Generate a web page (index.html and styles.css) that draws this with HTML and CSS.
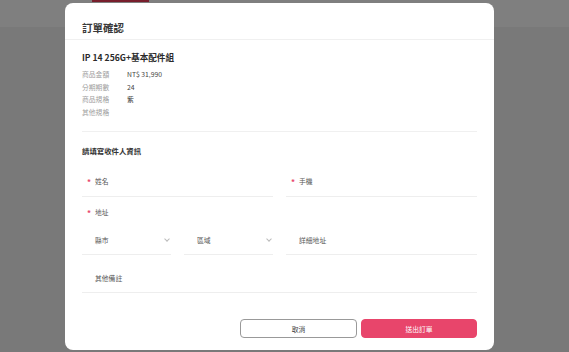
FILE: index.html
```html
<!DOCTYPE html>
<html lang="zh-Hant">
<head>
    <meta charset="UTF-8">
    <meta name="viewport" content="width=device-width, initial-scale=1.0">
    <title>訂單確認</title>
    <link rel="stylesheet" href="styles.css">
</head>
<body>
    <div class="page">
        <div class="topbar">
            <div class="tab-active"></div>
        </div>
        <div class="page-body"></div>
    </div>

    <div class="overlay">
        <div class="modal">
            <div class="modal-header">
                <h2>訂單確認</h2>
            </div>

            <div class="modal-body">
                <div class="product">
                    <h3>IP 14 256G+基本配件組</h3>
                    <div class="spec">
                        <span class="spec-label">商品金額</span><span class="spec-value">NT$ 31,990</span>
                        <span class="spec-label">分期期數</span><span class="spec-value">24</span>
                        <span class="spec-label">商品規格</span><span class="spec-value">紫</span>
                        <span class="spec-label">其他規格</span><span class="spec-value"></span>
                    </div>
                </div>

                <h4 class="section-title">請填寫收件人資訊</h4>

                <form class="receiver-form">
                    <div class="field span-2"><span class="required">*</span>姓名</div>
                    <div class="field span-2"><span class="required">*</span>手機</div>

                    <div class="group-label span-4"><span class="required">*</span>地址</div>

                    <div class="field select">縣市<span class="chevron"></span></div>
                    <div class="field select">區域<span class="chevron"></span></div>
                    <div class="field input span-2">詳細地址</div>

                    <div class="field input span-4">其他備註</div>
                </form>

                <div class="actions">
                    <button type="button" class="btn btn-cancel">取消</button>
                    <button type="button" class="btn btn-submit">送出訂單</button>
                </div>
            </div>
        </div>
    </div>
</body>
</html>
```

FILE: styles.css
```css
:root {
    --brand: #e8456b;
    --text: #333333;
    --muted: #999999;
    --line: #eeeeee;
}

* {
    box-sizing: border-box;
}

body {
    margin: 0;
    font-family: "Noto Sans CJK TC", "Noto Sans", sans-serif;
    color: var(--text);
    background: #f3f3f3;
}

.page {
    height: 352px;
}

.topbar {
    height: 27px;
    background: #ffffff;
    padding-left: 92px;
}

.tab-active {
    width: 57px;
    height: 2px;
    background: #f03d58;
}

/* dim layer over the page */
.overlay {
    position: fixed;
    inset: 0;
    background: rgba(0, 0, 0, 0.5);
    padding: 3px 0 0 65px;
}

.modal {
    width: 429px;
    height: 347px;
    background: #ffffff;
    border-radius: 8px;
}

.modal-header {
    padding: 19px 17px 5px;
    border-bottom: 1px solid #f0f0f0;
}

.modal-header h2 {
    margin: 0;
    font-size: 10.5px;
    line-height: 12px;
    font-weight: 700;
    color: #3a3a3a;
}

.modal-body {
    padding: 0 17px;
}

.product {
    padding-top: 11px;
    padding-bottom: 13px;
    border-bottom: 1px solid #f0f0f0;
}

.product h3 {
    margin: 0 0 5px;
    font-size: 8.6px;
    line-height: 12px;
    font-weight: 700;
    color: #2a2a2a;
}

.spec {
    display: grid;
    grid-template-columns: 45px 1fr;
    grid-auto-rows: 12.6px;
    align-items: center;
    font-size: 6.8px;
}

.spec-label {
    color: #a0a0a0;
}

.spec-value {
    color: #444;
}

.section-title {
    margin: 13px 0 0;
    font-size: 7.4px;
    line-height: 11px;
    font-weight: 700;
    color: #333;
}

.receiver-form {
    display: grid;
    grid-template-columns: repeat(4, 1fr);
    column-gap: 13px;
    margin-top: 10px;
}

.span-2 {
    grid-column: span 2;
}

.span-4 {
    grid-column: span 4;
}

.field {
    display: flex;
    align-items: center;
    height: 31px;
    border-bottom: 1px solid var(--line);
    padding-left: 5px;
    font-size: 6.8px;
    line-height: 10px;
    color: #555;
}

.field.select,
.field.input {
    padding: 1px 2px 0 13px;
    margin-top: 7px;
}

.group-label {
    display: flex;
    align-items: center;
    height: 10px;
    margin-top: 10px;
    padding-left: 5px;
    font-size: 6.8px;
    line-height: 10px;
    color: #555;
}

.required {
    color: var(--brand);
    margin-right: 4px;
    font-size: 8px;
    font-weight: 700;
    line-height: 10px;
    padding-top: 2px;
}

.chevron {
    margin-left: auto;
    width: 4px;
    height: 4px;
    border-right: 1px solid #bbbbbb;
    border-bottom: 1px solid #bbbbbb;
    transform: translateY(-1px) rotate(45deg);
}

.actions {
    display: flex;
    justify-content: flex-end;
    gap: 4px;
    margin-top: 26px;
}

.btn {
    height: 19px;
    border-radius: 4px;
    font-family: inherit;
    font-size: 6.8px;
    cursor: pointer;
    padding: 0;
}

.btn-cancel {
    width: 117px;
    background: #ffffff;
    border: 1px solid #999999;
    color: #444;
}

.btn-submit {
    width: 116px;
    background: var(--brand);
    border: 1px solid var(--brand);
    color: #ffffff;
}
```
